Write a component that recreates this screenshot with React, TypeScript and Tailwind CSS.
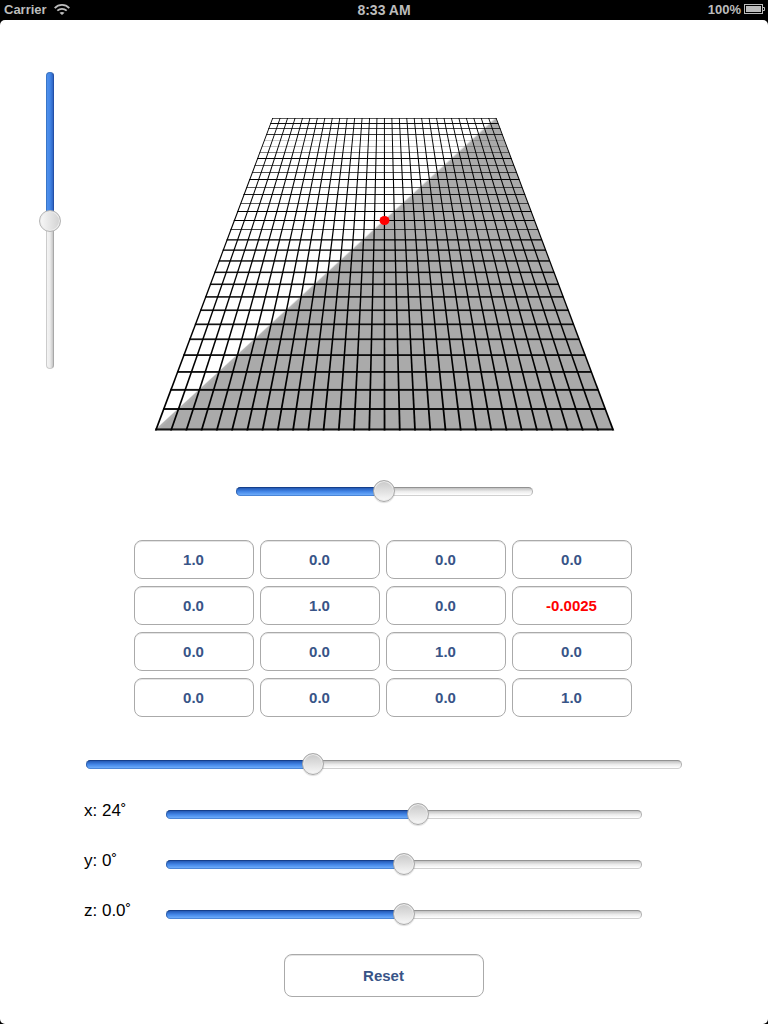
const C = Math.cos((24 * Math.PI) / 180);

function project(u: number, v: number): [number, number] {
  const w = 1 - 0.0025 * v * C;
  return [384.3 + u / w, 220.3 + (v * C) / w];
}

function points(list: [number, number][]) {
  return list.map(([u, v]) => project(u, v).map((n) => n.toFixed(2)).join(",")).join(" ");
}

const steps = Array.from({ length: 31 }, (_, i) => -150 + i * 10);
const rowInk = [0.65, 0.95, 0.75, 0.8, 0.2, 0.25, 0.5, 1, 0.65, 0.7, 1, 0.65, 0.9, 0.65, 1, 1, 0.75];

function Plane() {
  return (
    <svg viewBox="145 100 480 340" className="ml-[145px] mt-7 block h-[340px] w-[480px]">
      <polygon points={points([[-150, 150.3], [150, -150], [150, 150.3]])} fill="#aaaaaa" />
      <polyline points={points([[-149, 150], [150, -149.5]])} stroke="#bbbbbb" strokeOpacity=".45" strokeWidth="2.5" />
      {steps.map((u) => (
        <polygon
          key={u}
          fill="#000"
          points={points([
            [u - 0.45, -150.3],
            [u + 0.75, -150.3],
            [u + 0.75, 150.8],
            [u - 0.45, 150.8],
          ])}
        />
      ))}
      {steps.map((v, i) => {
        const y = project(0, v + 0.3)[1];
        const w = 1 - 0.0025 * v * C;
        const height = i < 17 ? 1 : 1.35 / w;
        const top = i < 17 ? Math.floor(y) : y - height / 2 + 0.1;
        return (
          <rect
            key={v}
            x={384.3 - 150.5 / w}
            y={top}
            width={301 / w}
            height={height}
            fill="#000"
            opacity={rowInk[i] ?? 0.92}
          />
        );
      })}
      <ellipse cx="384.5" cy="220.5" rx="5" ry="4.6" fill="#ff0000" />
    </svg>
  );
}

function Slider({ value, className }: { value: number; className: string }) {
  return (
    <div className={`relative h-[23px] ${className}`}>
      <div className="absolute inset-x-0 top-[7px] h-[9px] overflow-hidden rounded-full border border-[#b0b0b0] border-b-[#d0d0d0] border-t-[#929292] bg-linear-to-b from-[#c0c0c0] via-[#ececec] to-white" />
      <div
        className="absolute left-0 top-[7px] h-[9px] rounded-l-full border border-r-0 border-[#2c62b5] border-b-[#4a86d8] border-t-[#153f8b] bg-linear-to-b from-[#2459b5] via-[#4386e7] to-[#6eacfa]"
        style={{ width: value }}
      />
      <div
        className="absolute top-0 size-[22px] -translate-x-1/2 rounded-full border-[1.5px] border-[#a8a8a8] bg-linear-to-b from-[#c9c9c9] to-[#f8f8f8] shadow-[inset_0_0_0_1px_#ececec,0_1px_1px_#0002]"
        style={{ left: value }}
      />
    </div>
  );
}

function VerticalSlider() {
  return (
    <div className="absolute left-[39px] top-[72px] h-[297px] w-[23px]">
      <div className="absolute bottom-0 left-[7px] top-0 w-[8px] rounded-full border border-[#cccccc] border-r-[#a8a8a8] bg-linear-to-l from-[#c6c6c6] via-[#ececec] to-[#f4f4f4]" />
      <div className="absolute left-[7px] top-0 h-[148px] w-[8px] rounded-t-full border border-b-0 border-[#3976c8] border-r-[#2350a8] bg-linear-to-l from-[#2f66c4] via-[#4386e7] to-[#5090ec]" />
      <div className="absolute left-0 top-[138px] size-[22px] rounded-full border-[1.5px] border-[#b4b4b4] bg-linear-to-l from-[#d2d2d2] to-[#f8f8f8] shadow-[inset_0_0_0_1px_#ececec]" />
    </div>
  );
}

const cells = [
  "1.0", "0.0", "0.0", "0.0",
  "0.0", "1.0", "0.0", "-0.0025",
  "0.0", "0.0", "1.0", "0.0",
  "0.0", "0.0", "0.0", "1.0",
];

const angles = [
  { label: "x: 24", value: 252 },
  { label: "y: 0", value: 238 },
  { label: "z: 0.0", value: 238 },
];

const buttonStyle =
  "flex items-center justify-center rounded-[8px] border border-[#aaaaaa] bg-white pr-px pt-0.5 text-[15px] font-bold shadow-[inset_0_1px_0_#e4e4e4]";

export default function App() {
  return (
    <div className="relative flex h-[1024px] w-[768px] flex-col overflow-hidden bg-black font-['Liberation_Sans',Arial,sans-serif]">
      <header className="grid h-5 shrink-0 grid-cols-3 items-center px-1 text-[13px] font-bold leading-5 text-[#bcbcbc]">
        <div className="flex items-center gap-[7px]">
          <span>Carrier</span>
          <svg viewBox="0 0 16 11" className="-mt-0.5 h-[11px] w-4" fill="none" stroke="currentColor">
            <path d="M.7 4.1C4.8-.1 11.2-.1 15.3 4.1" strokeWidth="1.8" />
            <path d="M3.3 6.7c2.7-2.5 6.7-2.5 9.4 0" strokeWidth="1.8" />
            <path d="M5.5 8.7 8 11l2.5-2.3c-1.4-1.1-3.6-1.1-5 0Z" fill="currentColor" stroke="none" />
          </svg>
        </div>
        <div className="text-center text-[14px] leading-5">8:33 AM</div>
        <div className="-mr-1 flex items-center justify-end gap-[3px] pr-[3px]">
          <span>100%</span>
          <svg viewBox="0 0 21 10" className="-mt-0.5 h-[10px] w-[21px]">
            <rect x=".5" y=".5" width="18" height="9" fill="none" stroke="#bcbcbc" />
            <rect x="2" y="2" width="15" height="6" fill="#bcbcbc" />
            <path d="M19 3.5h1.5v3H19" fill="none" stroke="#bcbcbc" />
          </svg>
        </div>
      </header>
      <main className="flex min-h-0 flex-1 flex-col rounded-[5px] bg-white pt-[52px]">
        <VerticalSlider />
        <Plane />
        <Slider value={148} className="ml-[236px] mt-10 w-[297px] shrink-0" />
        <div className="ml-[134px] mt-[37px] grid w-[498px] shrink-0 grid-cols-4 gap-x-1.5 gap-y-[7px]">
          {cells.map((cell, i) => (
            <button
              key={i}
              className={`${buttonStyle} h-[39px] ${cell === "-0.0025" ? "text-[#ff0000]" : "text-[#385487]"}`}
            >
              {cell}
            </button>
          ))}
        </div>
        <Slider value={227} className="ml-[86px] mt-9 w-[596px] shrink-0" />
        <div className="ml-[84px] mt-[27px] flex shrink-0 flex-col gap-[27px]">
          {angles.map(({ label, value }) => (
            <div key={label} className="flex h-[23px] items-center">
              <span className="-mt-2 w-[82px] text-[17px] leading-5 text-black">{label}˚</span>
              <Slider value={value} className="w-[476px]" />
            </div>
          ))}
        </div>
        <button className={`${buttonStyle} ml-[284px] mt-7 h-[43px] w-[200px] shrink-0 text-[#385487]`}>
          Reset
        </button>
      </main>
    </div>
  );
}
